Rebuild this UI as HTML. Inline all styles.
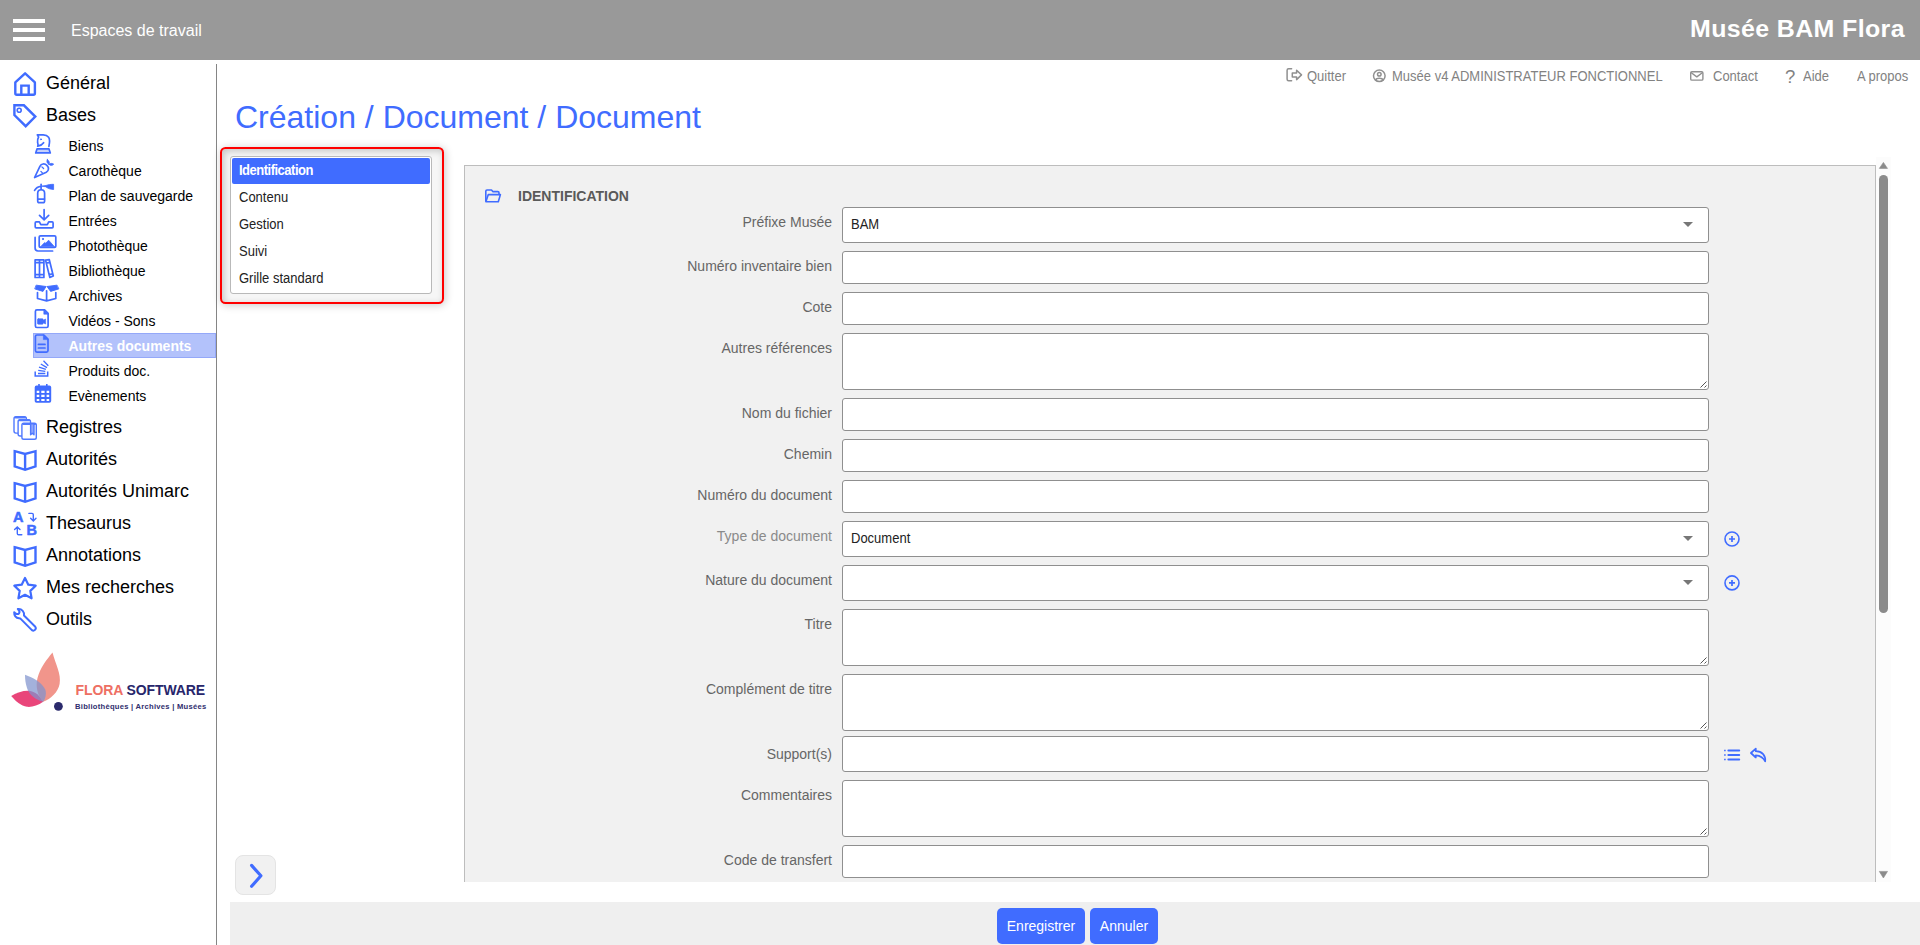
<!DOCTYPE html>
<html lang="fr">
<head>
<meta charset="utf-8">
<title>Création / Document / Document</title>
<style>
*{box-sizing:border-box;margin:0;padding:0}
html,body{width:1920px;height:945px;overflow:hidden;background:#fff}
body{font-family:"Liberation Sans",sans-serif;color:#000;position:relative}
.abs{position:absolute}
#hdr{position:absolute;left:0;top:0;width:1920px;height:60px;background:#999}
#burger{position:absolute;left:13px;top:19px;width:32px;height:22px}
#burger i{position:absolute;left:0;width:32px;height:4px;background:#fff}
#ws{position:absolute;left:71px;top:22px;font-size:16px;line-height:18px;color:#fff;white-space:nowrap}
#brand{position:absolute;left:1689.6px;top:12.5px;font-family:"Liberation Sans",sans-serif;font-weight:bold;font-size:23px;line-height:32px;color:#fff;white-space:nowrap;letter-spacing:0.35px;transform:scaleX(1.084);transform-origin:0 0}
#vline{position:absolute;left:216px;top:64px;width:1px;height:881px;background:#858585}
.m1{position:absolute;left:46px;font-size:18px;line-height:22px;white-space:nowrap;color:#000}
.m2{position:absolute;left:68.5px;font-size:14px;line-height:18px;white-space:nowrap;color:#000}
.ic1{position:absolute;left:11px;width:28px;height:28px}
.ic2{position:absolute;left:33px;width:24px;height:24px}
svg{display:block;overflow:visible}
.ic1 svg,.ic2 svg,.ic svg{fill:none;stroke:#406cff;stroke-width:2;stroke-linecap:round;stroke-linejoin:round}
#sel{position:absolute;left:33px;top:333px;width:183px;height:25px;background:#b3c2fb;border:1px solid #94a8f9}
#toplinks span{position:absolute;top:69px;font-size:13px;line-height:16px;color:#828282;white-space:nowrap;transform:scaleY(1.07);transform-origin:0 12.5px}
#title{position:absolute;left:235px;top:98px;font-size:32px;line-height:38px;color:#406cff;white-space:nowrap;font-weight:normal}
#navwrap{position:absolute;left:219.6px;top:147.2px;width:224px;height:156.4px;border:2px solid #f00;border-radius:5.5px;background:#f6f6f6;box-shadow:1px 1px 8px rgba(0,0,0,.22), inset 2px 2px 7px rgba(0,0,0,.2)}
#navlist{position:absolute;left:230px;top:156px;width:202px;height:138px;background:#fff;border:1px solid #b9b9b9;border-radius:3px}
#navlist div{position:absolute;left:1px;width:198px;height:26px;font-size:13px;line-height:26px;padding-left:7px;color:#222;border-radius:2px}
#navlist div span{display:inline-block;transform:scaleY(1.07);transform-origin:0 17.5px}
#navlist div.on{background:#406cff;color:#fff;font-weight:bold;letter-spacing:-0.5px}
#panel{position:absolute;left:464px;top:165px;width:1412px;height:717px;background:#f1f1f1;border:1px solid #bdbdbd;border-bottom:none}
#sect{position:absolute;left:518px;top:188px;font-size:14px;line-height:16px;font-weight:bold;color:#5a5a5a;white-space:nowrap}
.lb{position:absolute;right:1088px;font-size:14px;line-height:16px;color:#666;white-space:nowrap;text-align:right}
.in{position:absolute;left:842px;width:867px;background:#fff;border:1px solid #8f8f8f;border-radius:3px}
.in b{position:absolute;left:8px;top:9px;font-weight:normal;font-size:13px;line-height:16px;color:#222;transform:scaleY(1.07);transform-origin:0 12.5px}
.in .car{position:absolute;right:15px;top:14px;width:0;height:0;border-left:5px solid transparent;border-right:5px solid transparent;border-top:5px solid #777}
.in .rs{position:absolute;right:0;bottom:0;width:10px;height:10px}
#foot{position:absolute;left:230px;top:902px;width:1690px;height:43px;background:#efefef}
.btn{position:absolute;top:908px;height:36px;background:#406cff;border-radius:5px;color:#fff;font-size:14px;line-height:37px;text-align:center;white-space:nowrap}
#exp{position:absolute;left:235px;top:855px;width:41px;height:40px;background:#f1f1f1;border:1px solid #e4e4e4;border-radius:8px}
</style>
</head>
<body>
<div id="hdr">
  <div id="burger"><i style="top:0"></i><i style="top:9px"></i><i style="top:18px"></i></div>
  <div id="ws">Espaces de travail</div>
  <div id="brand">Musée BAM Flora</div>
</div>
<div id="vline"></div>

<!-- SIDEBAR -->
<div id="sidebar">
  <div id="sel"></div>
  <div class="m1" style="top:72px">Général</div>
  <div class="m1" style="top:104px">Bases</div>
  <div class="m2" style="top:137px">Biens</div>
  <div class="m2" style="top:162px">Carothèque</div>
  <div class="m2" style="top:187px">Plan de sauvegarde</div>
  <div class="m2" style="top:212px">Entrées</div>
  <div class="m2" style="top:237px">Photothèque</div>
  <div class="m2" style="top:262px">Bibliothèque</div>
  <div class="m2" style="top:287px">Archives</div>
  <div class="m2" style="top:312px">Vidéos - Sons</div>
  <div class="m2" style="top:337px;color:#fff;font-weight:bold">Autres documents</div>
  <div class="m2" style="top:362px">Produits doc.</div>
  <div class="m2" style="top:387px">Evènements</div>
  <div class="m1" style="top:416px">Registres</div>
  <div class="m1" style="top:448px">Autorités</div>
  <div class="m1" style="top:480px">Autorités Unimarc</div>
  <div class="m1" style="top:512px">Thesaurus</div>
  <div class="m1" style="top:544px">Annotations</div>
  <div class="m1" style="top:576px">Mes recherches</div>
  <div class="m1" style="top:608px">Outils</div>
</div>


<svg id="sideicons" class="abs" style="left:0;top:0" width="216" height="945" viewBox="0 0 216 945" fill="none" stroke="#406cff" stroke-width="2.4" stroke-linejoin="round" stroke-linecap="round">
  <!-- home -->
  <path d="M15.3 82.4 L25.1 73.3 L34.9 82.4 V93.2 Q34.9 94.7 33.4 94.7 H16.8 Q15.3 94.7 15.3 93.2 Z"/>
  <path d="M21.3 94.5 V85.6 H28.7 V94.5" stroke-linecap="butt" stroke-linejoin="miter"/>
  <!-- tag -->
  <path d="M14.4 105.3 H23.9 L35.3 116.6 L25.7 126.2 L14.4 115 Z" stroke-linejoin="miter"/>
  <circle cx="19.2" cy="110.3" r="2" stroke-width="1.6"/>
  <g stroke-width="1.7">
  <!-- chess knight -->
  <path d="M48.9 146.4 C49.6 143 50.3 139.5 48.6 137.2 C47.2 135.3 45.3 134.9 43.2 134.9 H37.3 L38.6 137 C37.6 138.8 37.4 140.6 37.6 142.3 C37.8 143.9 38.5 145 37.7 146.2 C40.3 145.8 42.4 144.4 43.6 142.7"/>
  <circle cx="40.9" cy="139.3" r="0.5" stroke-width="1"/>
  <path d="M37 148.9 H49 L50.3 152.9 H35.7 Z" fill="#c5d0fb"/>
  <!-- carrot -->
  <path d="M34.6 177.5 L39.9 166.3 C41.3 163.6 44.6 163.2 46.9 165.3 C49.2 167.4 49 170.7 46.3 172.2 Z"/>
  <path d="M41.9 166.9 L43.6 168.5 M40.9 171.4 L42.4 172.9" stroke-width="1.3"/>
  <path d="M47.3 159.7 C46.4 161.6 47.2 163.4 49 164.3 C49.6 162.5 49.1 160.6 47.3 159.7 Z M49.2 164.5 C50.6 165.8 52.4 165.6 53.6 164.2 C52.3 163.1 50.4 163.1 49.2 164.5 Z" fill="#406cff" stroke-width="1"/>
  <!-- extinguisher -->
  <path d="M37.7 193.2 C37.7 188.6 44.6 188.6 44.6 193.2 V200.9 Q44.6 202.6 42.9 202.6 H39.4 Q37.7 202.6 37.7 200.9 Z"/>
  <path d="M37.9 199.1 H44.4"/>
  <path d="M41.1 184.3 V189.5 M34.6 190.4 C35.9 188 38.3 186.5 41.1 186.3"/>
  <path d="M42 186.1 L46 185.5 C48 184.6 51 184.3 53.6 184.3 V189.5 C51 189.4 48 188.6 46 187 Z" fill="#406cff" stroke-width="0.8"/>
  <!-- download -->
  <path d="M44.1 209.6 V219.6 M39.5 215.3 L44.1 219.9 L48.7 215.3" stroke-linejoin="miter"/>
  <path d="M35.2 222.9 Q35.2 221.9 36.2 221.9 H39.4 L40.8 224.7 H47.3 L48.7 221.9 H52.1 Q53.1 221.9 53.1 222.9 V226.8 Q53.1 227.8 52.1 227.8 H36.2 Q35.2 227.8 35.2 226.8 Z"/>
  <!-- images -->
  <rect x="39.2" y="235.8" width="16.6" height="11.7" rx="1.3"/>
  <path d="M35.1 237.4 V248.1 Q35.1 251 38 251 H52.6"/>
  <circle cx="42.9" cy="239" r="0.6" fill="#406cff" stroke-width="1"/>
  <path d="M40.6 246.7 L44.7 242.5 L45.8 243.3 L48.6 240.2 L54.4 246.7 Z" fill="#406cff" stroke-width="0.8"/>
  <!-- books -->
  <path d="M35.1 259.9 H43.9 V277.5 H35.1 Z M39.5 259.9 V277.5 M35.1 262.6 H43.9 M35.1 274.7 H43.9" stroke-linejoin="round"/>
  <path d="M45.6 260.2 L49.3 259.7 L53.3 276 L49.8 277.4 Z M46.3 263.1 L50 262.4 M49.2 274.8 L52.7 273.6"/>
  <!-- box open -->
  <path d="M36.5 285.2 L46.1 286.5 L43 291.4 L35.1 289 Z M56.7 285.2 L47 286.5 L50.6 291.4 L58.5 289 Z" fill="#406cff" stroke-width="0.9"/>
  <path d="M37.5 292.6 V298.5 L46.6 300.9 L55.8 298.5 V292.6 M46.6 290.8 V300.6"/>
  <!-- file video -->
  <path d="M36.9 309.9 H44.6 L48.1 313.4 V326 Q48.1 327.5 46.6 327.5 H36.9 Q35.4 327.5 35.4 326 V311.4 Q35.4 309.9 36.9 309.9 Z"/>
  <path d="M43.8 310 V314.2 H48 Z" fill="#406cff" stroke-width="0.6"/>
  <path d="M38.3 318.8 H42.4 Q43.2 318.8 43.2 319.6 V320.3 L45.6 319 V324 L43.2 322.7 V323.4 Q43.2 324.2 42.4 324.2 H38.3 Q37.5 324.2 37.5 323.4 V319.6 Q37.5 318.8 38.3 318.8 Z" fill="#406cff" stroke-width="0.6"/>
  <!-- file alt (selected) -->
  <path d="M36.9 335 H43.9 L48 339.1 V350.6 Q48 352.1 46.5 352.1 H36.9 Q35.4 352.1 35.4 350.6 V336.5 Q35.4 335 36.9 335 Z"/>
  <path d="M43.4 335 V339.6 H48 Z" fill="#406cff" stroke-width="0.6"/>
  <path d="M38.4 344.4 H45 M38.4 348 H45"/>
  <!-- stack overflow -->
  <path d="M35.2 371.6 V376 H47.7 V371.6" stroke-linejoin="miter" stroke-linecap="butt" stroke-width="1.5"/>
  <path d="M38 373.5 H45.3 M38.2 370.4 L45.3 371.4 M39 367.2 L45.9 369.4 M40.8 364 L47 367.6 M43.5 360.8 L48.3 365.8" stroke-width="1.3" stroke-linecap="butt"/>
  <!-- calendar -->
  <path d="M36.5 385.6 H49.4 Q51.2 385.6 51.2 387.4 V401 Q51.2 402.8 49.4 402.8 H36.5 Q34.7 402.8 34.7 401 V387.4 Q34.7 385.6 36.5 385.6 Z" fill="#406cff" stroke="none"/>
  <path d="M39 384 V386.5 M46.8 384 V386.5" stroke-width="1.6" stroke-linecap="butt"/>
  <path d="M36.7 390.7 H39.3 V392.9 H36.7 Z M41.3 390.7 H44.6 V392.9 H41.3 Z M46.6 390.7 H49.2 V392.9 H46.6 Z M36.7 394.8 H39.3 V397 H36.7 Z M41.3 394.8 H44.6 V397 H41.3 Z M46.6 394.8 H49.2 V397 H46.6 Z M36.7 398.9 H39.3 V401 H36.7 Z M41.3 398.9 H44.6 V401 H41.3 Z M46.6 398.9 H49.2 V401 H46.6 Z" fill="#fff" stroke="none"/>
  </g>
  <!-- registres -->
  <g stroke-width="1.4" stroke="#5079ff">
  <rect x="14" y="416.8" width="12.4" height="16.3" rx="2" />
  <path d="M15.5 417.4 H25" stroke-width="2"/>
  <rect x="18.1" y="419.7" width="12.4" height="16.3" rx="2" fill="#fff"/>
  <path d="M19.6 420.3 H29" stroke-width="2"/>
  <rect x="21.9" y="423.3" width="14.4" height="16" rx="1.8" fill="#fff"/>
  <path d="M23.4 423.9 H35" stroke-width="2"/>
  <path d="M30.6 424.4 V434.8 L32.3 433.2 L34 434.8 V424.4" fill="#8fa6ff"/>
  </g>
  <!-- books open x3 -->
  <g stroke-linejoin="miter">
  <path d="M14.7 451.2 L25.1 454.0 L35.5 451.2 V466.4 L25.1 469.8 L14.7 466.4 Z M25.1 454.0 V469.7"/>
  <path d="M14.7 483.2 L25.1 486.0 L35.5 483.2 V498.4 L25.1 501.8 L14.7 498.4 Z M25.1 486.0 V501.7"/>
  <path d="M14.7 547.2 L25.1 550.0 L35.5 547.2 V562.4 L25.1 565.8 L14.7 562.4 Z M25.1 550.0 V565.7"/>
  </g>
  <!-- thesaurus arrows -->
  <g stroke-width="1.4" stroke-linejoin="miter">
  <path d="M28.9 513.4 H32 Q33.3 513.4 33.3 514.7 V520.3 M30.6 518.2 L33.3 520.9 L36 518.2"/>
  <path d="M21.8 534.7 H18.6 Q17.3 534.7 17.3 533.4 V527.4 M14.6 529.6 L17.3 526.9 L20 529.6"/>
  </g>
  <!-- star -->
  <path d="M25 578 L28.3 584.7 L35.7 585.7 L30.3 590.9 L31.6 598.3 L25 594.8 L18.4 598.3 L19.7 590.9 L14.3 585.7 L21.7 584.7 Z" stroke-width="2.2"/>
  <!-- wrench -->
  <path d="M14.2 612.3 C14 615.3 15.8 618.2 19 618.3 L20.2 618.4 L31.9 630.1 A2.4 2.4 0 0 0 35.3 626.8 L24 615.5 C24.6 612 22 608.6 17.8 609.1 C19.4 610.6 19.9 612.4 18.9 613.5 C17.8 614.6 15.8 614 14.2 612.3 Z" stroke-width="2"/>
</svg>
<div class="abs" style="left:13px;top:509px;font:bold 14.5px/16px 'Liberation Sans',sans-serif;color:#406cff;-webkit-text-stroke:0.5px #406cff">A</div>
<div class="abs" style="left:26.5px;top:522px;font:bold 14.5px/16px 'Liberation Sans',sans-serif;color:#406cff;-webkit-text-stroke:0.5px #406cff">B</div>


<svg class="abs" style="left:0;top:645px" width="216" height="80" viewBox="0 645 216 80">
  <path d="M11.2 696 C17 692.5 23 690.5 29 690.8 C35 691.5 40.5 696 43.2 701.8 C38 705.5 32 707.3 27 706.8 C21 706 15.5 701 11.2 696 Z" fill="#e9457a"/>
  <path d="M52.5 652.4 C55.5 664 61.5 674 59.6 684 C58 692 51 699 43.2 701.8 C37 695 35.5 686 37.5 678 C40 668 47 659 52.5 652.4 Z" fill="#f1958b"/>
  <path d="M25 674.8 C33 678 42 682 45.5 690 C46.6 694 45.5 698.5 43.2 701.8 C36 700 29 695 27 688 C25.5 683.5 25 679 25 674.8 Z" fill="#7f93cd" fill-opacity="0.72"/>
  <circle cx="58.4" cy="706.3" r="4.4" fill="#2b2a6c"/>
</svg>
<div class="abs" id="lg1" style="left:75.5px;top:682px;font:bold 14px/16px 'Liberation Sans',sans-serif;white-space:nowrap;letter-spacing:-0.1px"><span style="color:#ee6f63">FLORA</span> <span style="color:#27266b">SOFTWARE</span></div>
<div class="abs" id="lg2" style="left:75px;top:702px;font:bold 7.6px/10px 'Liberation Sans',sans-serif;white-space:nowrap;color:#2f2e6e;letter-spacing:0.27px">Bibliothèques | Archives | Musées</div>

<!-- TOP LINKS -->
<div id="toplinks">
  <span style="left:1307px">Quitter</span>
  <span style="left:1392px">Musée v4 ADMINISTRATEUR FONCTIONNEL</span>
  <span style="left:1713px">Contact</span>
  <span style="left:1785px;font-size:18.5px;top:68.5px;transform:none">?</span>
  <span style="left:1803px">Aide</span>
  <span style="left:1857px">A propos</span>
</div>

<h1 id="title">Création / Document / Document</h1>

<div id="navwrap"></div>
<div id="navlist">
  <div class="on" style="top:1px"><span>Identification</span></div>
  <div style="top:28px"><span>Contenu</span></div>
  <div style="top:55px"><span>Gestion</span></div>
  <div style="top:82px"><span>Suivi</span></div>
  <div style="top:109px"><span>Grille standard</span></div>
</div>

<div id="panel"></div>
<div id="sect">IDENTIFICATION</div>

<div id="form">
  <div class="lb" style="top:214px">Préfixe Musée</div>
  <div class="in" style="top:207px;height:36px"><b>BAM</b><i class="car"></i></div>
  <div class="lb" style="top:258px">Numéro inventaire bien</div>
  <div class="in" style="top:251px;height:33px"></div>
  <div class="lb" style="top:299px">Cote</div>
  <div class="in" style="top:292px;height:33px"></div>
  <div class="lb" style="top:340px">Autres références</div>
  <div class="in" style="top:333px;height:57px"><svg class="rs" viewBox="0 0 10 10"><path d="M2.5 8.5 L8.5 2.5 M6.5 8.5 L8.5 6.5" stroke="#555" stroke-width="1" fill="none"/></svg></div>
  <div class="lb" style="top:405px">Nom du fichier</div>
  <div class="in" style="top:398px;height:33px"></div>
  <div class="lb" style="top:446px">Chemin</div>
  <div class="in" style="top:439px;height:33px"></div>
  <div class="lb" style="top:487px">Numéro du document</div>
  <div class="in" style="top:480px;height:33px"></div>
  <div class="lb" style="top:528px;color:#8a8a8a">Type de document</div>
  <div class="in" style="top:521px;height:36px"><b>Document</b><i class="car"></i></div>
  <div class="lb" style="top:572px">Nature du document</div>
  <div class="in" style="top:565px;height:36px"><i class="car"></i></div>
  <div class="lb" style="top:616px">Titre</div>
  <div class="in" style="top:609px;height:57px"><svg class="rs" viewBox="0 0 10 10"><path d="M2.5 8.5 L8.5 2.5 M6.5 8.5 L8.5 6.5" stroke="#555" stroke-width="1" fill="none"/></svg></div>
  <div class="lb" style="top:681px">Complément de titre</div>
  <div class="in" style="top:674px;height:57px"><svg class="rs" viewBox="0 0 10 10"><path d="M2.5 8.5 L8.5 2.5 M6.5 8.5 L8.5 6.5" stroke="#555" stroke-width="1" fill="none"/></svg></div>
  <div class="lb" style="top:746px">Support(s)</div>
  <div class="in" style="top:736px;height:36px"></div>
  <div class="lb" style="top:787px">Commentaires</div>
  <div class="in" style="top:780px;height:57px"><svg class="rs" viewBox="0 0 10 10"><path d="M2.5 8.5 L8.5 2.5 M6.5 8.5 L8.5 6.5" stroke="#555" stroke-width="1" fill="none"/></svg></div>
  <div class="lb" style="top:852px">Code de transfert</div>
  <div class="in" style="top:845px;height:33px"></div>
</div>


<div id="exp"></div>
<svg class="abs" style="left:1270px;top:60px" width="650" height="40" viewBox="1270 60 650 40" fill="none" stroke="#909090" stroke-width="1.5" stroke-linejoin="round" stroke-linecap="round">
  <path d="M1291.6 68.8 H1288.6 Q1287.1 68.8 1287.1 70.3 V79.2 Q1287.1 80.7 1288.6 80.7 H1291.6"/>
  <path d="M1292.3 72.9 H1296.6 V70.2 L1301.5 74.9 L1296.6 79.6 V76.9 H1292.3 Z"/>
  <circle cx="1379.3" cy="75.8" r="5.8"/>
  <circle cx="1379.3" cy="74.2" r="1.8"/>
  <path d="M1375.7 80.2 C1376.4 77.7 1382.2 77.7 1382.9 80.2"/>
  <rect x="1690.7" y="71.7" width="12.2" height="8.4" rx="1.2" stroke-width="1.4"/>
  <path d="M1691.3 72.8 L1696.8 76.9 L1702.3 72.8" stroke-width="1.4"/>
</svg>
<svg class="abs" style="left:464px;top:165px" width="1412" height="717" viewBox="464 165 1412 717" fill="none" stroke="#406cff" stroke-width="1.6" stroke-linejoin="round" stroke-linecap="round">
  <!-- folder open -->
  <path d="M485.8 201 V191.2 Q485.8 190 487 190 H491.5 L492.8 191.6 H497.8 Q499 191.6 499 192.8 V194.4"/>
  <path d="M488.3 194.6 H500.4 L498.3 201.8 H485.9 Z"/>
  <!-- plus circles -->
  <circle cx="1732" cy="539" r="7"/>
  <path d="M1729 539 H1735 M1732 536 V542" stroke-width="1.7" stroke-linecap="butt"/>
  <circle cx="1732" cy="582.9" r="7"/>
  <path d="M1729 582.9 H1735 M1732 579.9 V585.9" stroke-width="1.7" stroke-linecap="butt"/>
  <!-- list -->
  <path d="M1728.3 750.5 H1739.3 M1728.3 755 H1739.3 M1728.3 759.5 H1739.3" stroke-width="1.8"/>
  <path d="M1724.1 749.7 H1725.7 V751.3 H1724.1 Z M1724.1 754.2 H1725.7 V755.8 H1724.1 Z M1724.1 758.7 H1725.7 V760.3 H1724.1 Z" fill="#406cff" stroke="none"/>
  <!-- reply -->
  <path d="M1750.9 753 L1755.8 748.6 V751.2 C1762 751.2 1766 755.6 1765.2 761.5 C1763.6 757.9 1760.5 755.6 1755.8 755.3 V757.5 Z" stroke-width="1.7"/>
</svg>
<svg class="abs" style="left:1876px;top:157px" width="15" height="725" viewBox="1876 157 15 725">
  <rect x="1876" y="157" width="15" height="725" fill="#fcfcfc"/>
  <path d="M1883.4 162.4 L1887.5 168.4 H1879.3 Z" fill="#8b8b8b" stroke="#8b8b8b" stroke-width="0.6" stroke-linejoin="round"/>
  <rect x="1879" y="175" width="9" height="438" rx="4.5" fill="#8b8b8b"/>
  <path d="M1883.4 878 L1887.5 871.4 H1879.3 Z" fill="#8b8b8b" stroke="#8b8b8b" stroke-width="0.6" stroke-linejoin="round"/>
</svg>
<svg class="abs" style="left:236px;top:855px" width="40" height="40" viewBox="236 855 40 40" fill="none" stroke="#406cff" stroke-width="3.2" stroke-linecap="round" stroke-linejoin="round">
  <path d="M251.6 865.4 L260.9 875.8 L251.6 886.3"/>
</svg>

<div id="foot"></div>
<div class="btn" style="left:997px;width:88px">Enregistrer</div>
<div class="btn" style="left:1090px;width:68px">Annuler</div>
</body>
</html>
